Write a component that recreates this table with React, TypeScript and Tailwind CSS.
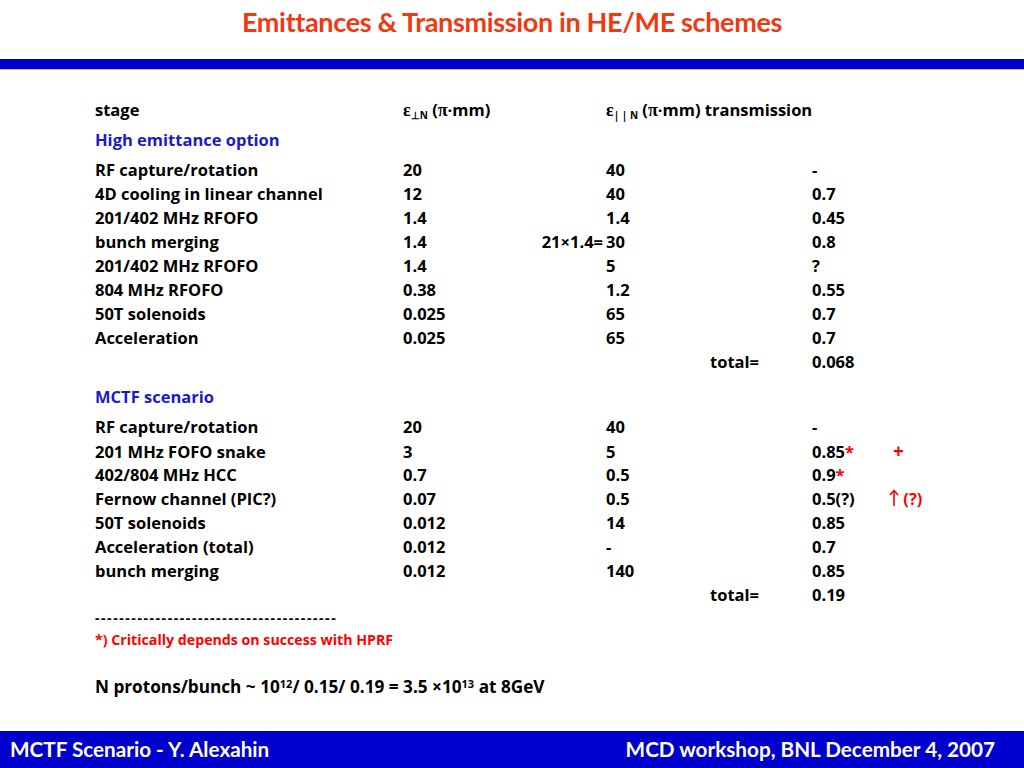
import React from "react";

const L = { fontFamily: "Lato, 'Open Sans', sans-serif" };
const O = { fontFamily: "'Open Sans', Lato, sans-serif" };
const S = { fontFamily: "'Liberation Serif', 'DejaVu Serif', serif" };

type Row = { a: string; b?: React.ReactNode; c?: React.ReactNode; d?: React.ReactNode; e?: React.ReactNode; f?: React.ReactNode };

function R({ a, b, c, d, e, f }: Row) {
  return (
    <div className="grid h-[24px] items-center leading-[24px]" style={{ gridTemplateColumns: "308px 203px 104px 102px 77px 1fr" }}>
      <div className="whitespace-nowrap">{a}</div>
      <div>{b}</div>
      <div>{c}</div>
      <div>{d}</div>
      <div>{e}</div>
      <div>{f}</div>
    </div>
  );
}

const Star = () => <span className="text-[#ff0000]">*</span>;
const Eps = () => <span style={S} className="text-[18px]">ε</span>;
const Pi = () => <span style={S} className="text-[18px]">π</span>;

const UpArrow = () => (
  <svg width="10" height="18" viewBox="0 0 10 18" className="inline-block align-[-2px]">
    <path d="M5 17V2" stroke="#ff0000" strokeWidth="1.6" fill="none" />
    <path d="M1 6L5 1.5L9 6" stroke="#ff0000" strokeWidth="1.6" fill="none" strokeLinejoin="miter" />
  </svg>
);

export default function App() {
  return (
    <div className="relative w-[1024px] h-[768px] bg-white overflow-hidden flex flex-col">
      <div className="h-[59px] flex items-start justify-center pt-[5px]" style={L}>
        <h1 className="text-[#ee3a12] font-bold text-[27px] leading-[34px] tracking-[-0.35px]">Emittances &amp; Transmission in HE/ME schemes</h1>
      </div>
      <div className="h-[10px] bg-[#0000cc]" />
      <div className="h-[1px] bg-[#c8c8e8]" />
      <div className="pl-[95px] pt-[28px] font-bold text-[16.5px] text-black" style={O}>
        <R
          a="stage"
          b={<span className="whitespace-nowrap"><Eps /><sub className="text-[10px]">⊥N</sub> (<Pi />·mm)</span>}
          c={<span className="whitespace-nowrap"><Eps /><sub className="text-[10px]">| | N</sub> (<Pi />·mm) transmission</span>}
        />
        <div className="h-[30px] flex items-end leading-[24px] text-[#1a1acc]"><div className="h-[24px]">High emittance option</div></div>
        <div className="h-[6px]" />
        <R a="RF capture/rotation" b="20" c="40" e="-" />
        <R a="4D cooling in linear channel" b="12" c="40" e="0.7" />
        <R a="201/402 MHz RFOFO" b="1.4" c="1.4" e="0.45" />
        <R a="bunch merging" b={<div className="flex justify-between pr-[3px]"><span>1.4</span><span>21×1.4=</span></div>} c="30" e="0.8" />
        <R a="201/402 MHz RFOFO" b="1.4" c="5" e="?" />
        <R a="804 MHz RFOFO" b="0.38" c="1.2" e="0.55" />
        <R a="50T solenoids" b="0.025" c="65" e="0.7" />
        <R a="Acceleration" b="0.025" c="65" e="0.7" />
        <R a="" d="total=" e="0.068" />
        <div className="h-[11px]" />
        <div className="h-[24px] leading-[24px] text-[#1a1acc]">MCTF scenario</div>
        <div className="h-[6px]" />
        <R a="RF capture/rotation" b="20" c="40" e="-" />
        <R a="201 MHz FOFO snake" b="3" c="5" e={<span>0.85<Star /></span>} f={<span className="text-[#ff0000] pl-[4px] text-[19px]">+</span>} />
        <R a="402/804 MHz HCC" b="0.7" c="0.5" e={<span>0.9<Star /></span>} />
        <R a="Fernow channel (PIC?)" b="0.07" c="0.5" e="0.5(?)" f={<span className="text-[#ff0000] whitespace-nowrap"><UpArrow /> (?)</span>} />
        <R a="50T solenoids" b="0.012" c="14" e="0.85" />
        <R a="Acceleration (total)" b="0.012" c="-" e="0.7" />
        <R a="bunch merging" b="0.012" c="140" e="0.85" />
        <R a="" d="total=" e="0.19" />
        <div className="h-[22px] leading-[22px] text-[14px] tracking-[1.55px] whitespace-nowrap">----------------------------------------</div>
        <div className="h-[22px] leading-[22px] text-[14.2px] text-[#ff0000]">*) Critically depends on success with HPRF</div>
        <div className="h-[24px] leading-[24px] mt-[24px] text-[17.2px]">
          N protons/bunch ~ 10<sup className="text-[11px]">12</sup>/ 0.15/ 0.19 = 3.5 ×10<sup className="text-[11px]">13</sup> at 8GeV
        </div>
      </div>
      <div className="flex-1" />
      <div className="h-[37px] bg-[#0000cc] text-white text-[20.7px] font-bold flex items-center justify-between pl-[10px] pr-[29px]" style={L}>
        <span>MCTF Scenario - Y. Alexahin</span>
        <span>MCD workshop, BNL December 4, 2007</span>
      </div>
    </div>
  );
}
